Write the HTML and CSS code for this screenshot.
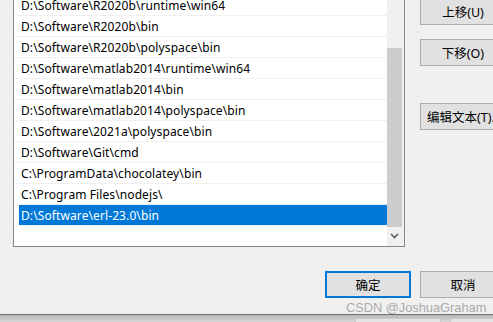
FILE: index.html
```html
<!DOCTYPE html>
<html lang="zh-CN">
<head>
    <meta charset="UTF-8">
    <title>编辑环境变量</title>
    <link rel="stylesheet" href="styles.css">
</head>
<body>
    <div class="dialog">
        <div class="top">
            <div class="listbox">
                <div class="rows">
                    <div class="row">D:\Software\R2020b\runtime\win64</div>
                    <div class="row">D:\Software\R2020b\bin</div>
                    <div class="row">D:\Software\R2020b\polyspace\bin</div>
                    <div class="row">D:\Software\matlab2014\runtime\win64</div>
                    <div class="row">D:\Software\matlab2014\bin</div>
                    <div class="row">D:\Software\matlab2014\polyspace\bin</div>
                    <div class="row">D:\Software\2021a\polyspace\bin</div>
                    <div class="row">D:\Software\Git\cmd</div>
                    <div class="row">C:\ProgramData\chocolatey\bin</div>
                    <div class="row">C:\Program Files\nodejs\</div>
                    <div class="row selected">D:\Software\erl-23.0\bin</div>
                </div>
                <div class="vscroll">
                    <div class="track"><div class="thumb"></div></div>
                    <div class="arrow-down">
                        <svg width="9" height="6" viewBox="0 0 9 6"><path d="M1 1 L4.5 4.5 L8 1" fill="none" stroke="#606060" stroke-width="1.6"/></svg>
                    </div>
                </div>
            </div>
            <div class="side-buttons">
                <button class="btn">上移(U)</button>
                <button class="btn">下移(O)</button>
                <button class="btn btn-edit">编辑文本(T)...</button>
            </div>
        </div>
        <div class="footer">
            <button class="btn btn-default">确定</button>
            <button class="btn">取消</button>
        </div>
    </div>
    <div class="behind">
        <div class="ghost ghost-ok"></div>
        <div class="ghost ghost-cancel"></div>
    </div>
    <div class="watermark">CSDN @JoshuaGraham</div>
</body>
</html>
```

FILE: styles.css
```css
* {
    margin: 0;
    padding: 0;
    box-sizing: border-box;
}
body {
    width: 493px;
    height: 322px;
    overflow: hidden;
    position: relative;
    background: #f0f0f0;
    font-family: "Noto Sans", "Noto Sans CJK SC", sans-serif;
    font-size: 12px;
    color: #000;
}
.dialog {
    height: 315px;
    background: #f0f0f0;
    border-bottom: 1px solid #6e6e6e;
    overflow: hidden;
}
.top {
    display: flex;
    margin-top: -6px;
}
.listbox {
    display: flex;
    width: 392px;
    height: 253px;
    margin-left: 13px;
    flex-shrink: 0;
    background: #fff;
    border: 1px solid #828790;
    padding-left: 1px;
}
.rows {
    flex: 1;
}
.row {
    height: 21px;
    line-height: 21px;
    padding-left: 6px;
    letter-spacing: 0.1px;
    border-bottom: 1px solid #f0f0f0;
    white-space: nowrap;
    overflow: hidden;
}
.row.selected {
    background: #0078d7;
    color: #fff;
    box-shadow: inset 4px 0 #fff;
}
.vscroll {
    width: 17px;
    display: flex;
    flex-direction: column;
    background: #f0f0f0;
}
.track {
    height: 232px;
    display: flex;
    flex-direction: column;
    justify-content: flex-end;
}
.thumb {
    height: 179px;
    margin: 0 2px 0 0;
    background: #cdcdcd;
}
.arrow-down {
    height: 17px;
    display: flex;
    align-items: center;
    justify-content: center;
    padding-right: 2px;
}
.side-buttons {
    display: flex;
    flex-direction: column;
    margin-left: 15px;
    padding-top: 4px;
}
.btn {
    width: 86px;
    height: 27px;
    flex-shrink: 0;
    background: #e1e1e1;
    border: 1px solid #adadad;
    font-family: "Noto Sans", "Noto Sans CJK SC", sans-serif;
    font-size: 12.5px;
    color: #000;
    white-space: nowrap;
    overflow: hidden;
}
.side-buttons .btn + .btn {
    margin-top: 14px;
}
.side-buttons .btn-edit {
    margin-top: 37px !important;
    text-align: left;
    padding-left: 6px;
}
.footer {
    display: flex;
    gap: 9px;
    margin-top: 24px;
    padding-left: 325px;
}
.btn-default {
    border: 2px solid #0078d7;
}
.behind {
    height: 7px;
    position: relative;
    background: linear-gradient(#b8b8b8, #d6d6d6);
}
.ghost {
    position: absolute;
    top: 3px;
    height: 10px;
    background: #e3e3e3;
    border: 1px solid #c8c8c8;
}
.ghost-ok {
    left: 355px;
    width: 86px;
}
.ghost-cancel {
    left: 450px;
    width: 60px;
}
.watermark {
    position: absolute;
    left: 346px;
    top: 300px;
    font-family: "Liberation Sans", sans-serif;
    font-size: 12.8px;
    color: rgba(150, 150, 150, 0.8);
    white-space: nowrap;
}
```
